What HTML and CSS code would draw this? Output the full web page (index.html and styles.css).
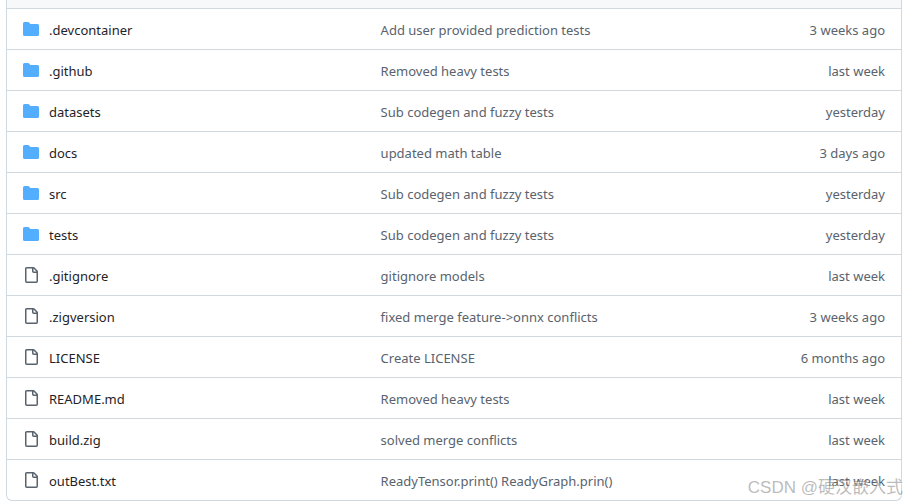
FILE: index.html
```html
<!DOCTYPE html>
<html lang="en">
<head>
<meta charset="utf-8">
<title>Repository files</title>
<link rel="stylesheet" href="styles.css">
</head>
<body>
<svg class="sprite" aria-hidden="true">
  <symbol id="folder" viewBox="0 0 16 16"><path d="M1.5 1A1.5 1.5 0 0 0 0 2.5v11A1.5 1.5 0 0 0 1.5 15h13a1.5 1.5 0 0 0 1.5-1.5v-9A1.5 1.5 0 0 0 14.500 3H7.500a.25.25 0 0 1-.2-.1l-.9-1.2C6.070 1.260 5.550 1 5 1H1.500Z"/></symbol>
  <symbol id="file" viewBox="0 0 16 16"><path d="M2 1.750C2 .784 2.784 0 3.750 0h6.586c.464 0 .909.184 1.237.513l2.914 2.914c.329.328.513.773.513 1.237v9.586A1.750 1.750 0 0 1 13.250 16h-9.500A1.750 1.750 0 0 1 2 14.250Zm1.750-.25a.25.25 0 0 0-.25.25v12.500c0 .138.112.25.25.25h9.500a.25.25 0 0 0 .25-.25V6h-2.750A1.750 1.750 0 0 1 9 4.250V1.500Zm6.750.062V4.250c0 .138.112.25.25.25h2.688l-.011-.013-2.914-2.914-.013-.011Z"/></symbol>
</svg>
<main class="files">
  <div class="files-header"></div>
  <table class="files-table">
    <tbody>
      <tr><td class="name"><div class="entry"><svg class="icon folder"><use href="#folder"/></svg><a href="#">.devcontainer</a></div></td><td class="message"><a href="#">Add user provided prediction tests</a></td><td class="age">3 weeks ago</td></tr>
      <tr><td class="name"><div class="entry"><svg class="icon folder"><use href="#folder"/></svg><a href="#">.github</a></div></td><td class="message"><a href="#">Removed heavy tests</a></td><td class="age">last week</td></tr>
      <tr><td class="name"><div class="entry"><svg class="icon folder"><use href="#folder"/></svg><a href="#">datasets</a></div></td><td class="message"><a href="#">Sub codegen and fuzzy tests</a></td><td class="age">yesterday</td></tr>
      <tr><td class="name"><div class="entry"><svg class="icon folder"><use href="#folder"/></svg><a href="#">docs</a></div></td><td class="message"><a href="#">updated math table</a></td><td class="age">3 days ago</td></tr>
      <tr><td class="name"><div class="entry"><svg class="icon folder"><use href="#folder"/></svg><a href="#">src</a></div></td><td class="message"><a href="#">Sub codegen and fuzzy tests</a></td><td class="age">yesterday</td></tr>
      <tr><td class="name"><div class="entry"><svg class="icon folder"><use href="#folder"/></svg><a href="#">tests</a></div></td><td class="message"><a href="#">Sub codegen and fuzzy tests</a></td><td class="age">yesterday</td></tr>
      <tr><td class="name"><div class="entry"><svg class="icon"><use href="#file"/></svg><a href="#">.gitignore</a></div></td><td class="message"><a href="#">gitignore models</a></td><td class="age">last week</td></tr>
      <tr><td class="name"><div class="entry"><svg class="icon"><use href="#file"/></svg><a href="#">.zigversion</a></div></td><td class="message"><a href="#">fixed merge feature-&gt;onnx conflicts</a></td><td class="age">3 weeks ago</td></tr>
      <tr><td class="name"><div class="entry"><svg class="icon"><use href="#file"/></svg><a href="#">LICENSE</a></div></td><td class="message"><a href="#">Create LICENSE</a></td><td class="age">6 months ago</td></tr>
      <tr><td class="name"><div class="entry"><svg class="icon"><use href="#file"/></svg><a href="#">README.md</a></div></td><td class="message"><a href="#">Removed heavy tests</a></td><td class="age">last week</td></tr>
      <tr><td class="name"><div class="entry"><svg class="icon"><use href="#file"/></svg><a href="#">build.zig</a></div></td><td class="message"><a href="#">solved merge conflicts</a></td><td class="age">last week</td></tr>
      <tr><td class="name"><div class="entry"><svg class="icon"><use href="#file"/></svg><a href="#">outBest.txt</a></div></td><td class="message"><a href="#">ReadyTensor.print() ReadyGraph.prin()</a></td><td class="age">last week</td></tr>
    </tbody>
  </table>
  <div class="watermark">CSDN @硬汉嵌入式</div>
</main>
</body>
</html>
```
FILE: styles.css
```css
body {
  margin: 0;
  background: #fff;
  color: #1f2328;
  font: 13px/20px "Noto Sans", "Open Sans", sans-serif;
}

.sprite {
  display: none;
}

.files {
  position: relative;
  margin: 0 5px 0 6px;
  border: 1px solid #d1d9e0;
  border-top: 0;
  border-radius: 0 0 6px 6px;
}

.files-header {
  height: 8px;
  background: #f6f8fa;
}

.files-table {
  width: 100%;
  table-layout: fixed;
  border-collapse: separate;
  border-spacing: 0;
}

.files-table td {
  height: 38px;
  padding: 2px 16px 0;
  border-top: 1px solid #d1d9e0;
  white-space: nowrap;
}

.name {
  width: 40%;
  box-sizing: border-box;
}

.files-table .name {
  height: 41px;
}

.age {
  width: 136px;
  text-align: right;
}

.message,
.age {
  color: #59636e;
}

.entry {
  display: flex;
  align-items: center;
  gap: 10px;
}

.icon {
  width: 16px;
  height: 16px;
  margin-bottom: 2px;
  fill: #59636e;
}

.folder {
  fill: #54aeff;
}

a {
  color: inherit;
  text-decoration: none;
}

.watermark {
  position: absolute;
  right: -2px;
  bottom: 0;
  color: rgba(120, 120, 120, 0.5);
  font: 17px/24px "Liberation Sans", "Noto Sans CJK SC", sans-serif;
  text-shadow: 1px 1px 1px rgba(255, 255, 255, 0.6);
  white-space: nowrap;
  pointer-events: none;
}
```
